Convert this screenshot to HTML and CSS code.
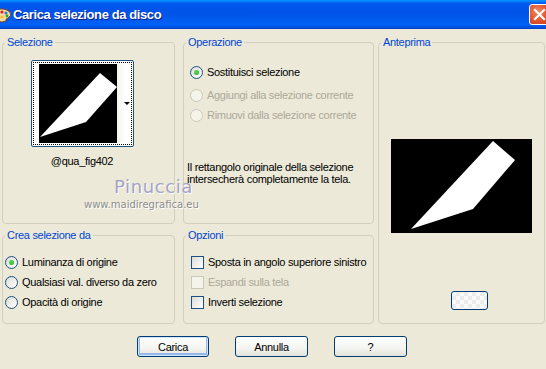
FILE: index.html
```html
<!DOCTYPE html>
<html lang="it">
<head>
  <meta charset="UTF-8" />
  <title>Carica selezione da disco</title>
  <link rel="stylesheet" href="styles.css">
</head>
<body>

<div class="window">
  <div class="titlebar">
    <svg class="app-icon" width="12" height="16" viewBox="0 0 12 16">
      <path d="M-4 3 Q4 0 10 5 Q12 9 8 11 Q5 12 6 14 Q3 16 -4 14 Z" fill="#f3d9a4" stroke="#7a4b1c" stroke-width="1"/>
      <circle cx="2" cy="5" r="1.6" fill="#e02020"/>
      <circle cx="6" cy="6" r="1.6" fill="#2a7de0"/>
      <circle cx="7" cy="9" r="1.4" fill="#28a828"/>
      <circle cx="2" cy="10" r="1.5" fill="#f0c020"/>
    </svg>
    <span class="title">Carica selezione da disco</span>
    <div class="close-btn">
      <svg width="13" height="13" viewBox="0 0 13 13"><path d="M2 2 L11 11 M11 2 L2 11" stroke="#fff" stroke-width="2.2" stroke-linecap="square"/></svg>
    </div>
  </div>

  <div class="panels">
    <fieldset class="group g-selezione">
      <legend>Selezione</legend>
      <div class="thumb">
        <div class="thumb-focus">
          <svg class="thumb-img" width="78" height="79" viewBox="0 0 78 79">
            <rect width="78" height="79" fill="#000"/>
            <polygon points="61,9 78,23 47,58 1,73" fill="#fff"/>
          </svg>
          <div class="thumb-strip"></div>
          <span class="thumb-arrow"></span>
        </div>
      </div>
      <div class="thumb-name">@qua_fig402</div>
    </fieldset>

    <fieldset class="group g-operazione">
      <legend>Operazione</legend>
      <div class="opt"><span class="radio checked"></span>Sostituisci selezione</div>
      <div class="opt disabled"><span class="radio"></span>Aggiungi alla selezione corrente</div>
      <div class="opt disabled"><span class="radio"></span>Rimuovi dalla selezione corrente</div>
      <p class="note">Il rettangolo originale della selezione intersecherà completamente la tela.</p>
    </fieldset>

    <fieldset class="group g-anteprima">
      <legend>Anteprima</legend>
      <svg class="preview" width="141" height="94" viewBox="0 0 141 94">
        <rect width="141" height="94" fill="#000"/>
        <polygon points="102,2 124,21 82,70 20,90" fill="#fff"/>
      </svg>
      <div class="swatch-btn"></div>
    </fieldset>

    <fieldset class="group g-crea">
      <legend>Crea selezione da</legend>
      <div class="opt"><span class="radio checked"></span>Luminanza di origine</div>
      <div class="opt"><span class="radio"></span>Qualsiasi val. diverso da zero</div>
      <div class="opt"><span class="radio"></span>Opacità di origine</div>
    </fieldset>

    <fieldset class="group g-opzioni">
      <legend>Opzioni</legend>
      <div class="opt"><span class="check"></span>Sposta in angolo superiore sinistro</div>
      <div class="opt disabled"><span class="check"></span>Espandi sulla tela</div>
      <div class="opt"><span class="check"></span>Inverti selezione</div>
    </fieldset>
  </div>

  <div class="buttons">
    <button class="btn default">Carica</button>
    <button class="btn">Annulla</button>
    <button class="btn">?</button>
  </div>

  <div class="watermark">
    <div class="wm-name">Pinuccia</div>
    <div class="wm-url">www.maidiregrafica.eu</div>
  </div>
</div>

</body>
</html>
```

FILE: styles.css
```css
body {
  margin: 0;
  background: #ece9d8;
  font-family: "Liberation Sans", Arial, sans-serif;
  font-size: 11px;
  letter-spacing: -0.3px;
  color: #000;
}

.window {
  position: relative;
  width: 546px;
  height: 369px;
  overflow: hidden;
  background: #ece9d8;
}

.titlebar {
  height: 29px;
  display: flex;
  align-items: center;
  background: linear-gradient(#0997ff 0, #0058ee 12%, #0053e6 45%, #0061f6 85%, #0052e0 94%, #003dc8 100%);
}

.app-icon {
  flex: none;
  margin-top: 1px;
}

.title {
  margin-left: 1px;
  color: #fff;
  font-weight: bold;
  font-size: 13px;
  letter-spacing: -0.4px;
  text-shadow: 1px 1px 0 #0a1e8a;
}

.close-btn {
  margin-left: auto;
  margin-right: -4px;
  width: 19px;
  height: 19px;
  border: 1px solid #fff;
  border-radius: 3px;
  background: radial-gradient(circle at 40% 35%, #f08a64 0, #e0542e 55%, #c03c1c 100%);
  display: flex;
  align-items: center;
  justify-content: center;
}

.panels {
  display: grid;
  grid-template-columns: 173px 8px 191px 4px 167px;
  grid-template-rows: 188px 95px;
  row-gap: 5px;
  padding: 7px 0 0 2px;
}

.g-selezione { grid-column: 1; grid-row: 1; }
.g-operazione { grid-column: 3; grid-row: 1; }
.g-anteprima { grid-column: 5; grid-row: 1 / 3; }
.g-crea { grid-column: 1; grid-row: 2; }
.g-opzioni { grid-column: 3; grid-row: 2; }

.group {
  margin: 0;
  padding: 0;
  min-width: 0;
  border: 1px solid #d0d0bf;
  border-radius: 4px;
}

.group legend {
  margin-left: 2px;
  padding: 0 2px;
  color: #0046d5;
  line-height: 13px;
}

/* Selezione */
.thumb {
  margin: 11px 0 0 28px;
  width: 99px;
  height: 83px;
  border: 1px solid #1c5180;
  border-radius: 2px;
  background: #fff;
  padding: 1px;
}

.thumb-focus {
  position: relative;
  height: 83px;
  border: 1px dotted #000;
  display: flex;
  align-items: flex-start;
  padding: 1px 0 0 5px;
  box-sizing: border-box;
}

.thumb-img {
  display: block;
}

.thumb-strip {
  width: 9px;
  height: 79px;
  background: linear-gradient(to right, #f4f4f0, #fff);
}

.thumb-arrow {
  position: absolute;
  right: 1px;
  top: 39px;
  border-left: 3px solid transparent;
  border-right: 3px solid transparent;
  border-top: 3px solid #000;
}

.thumb-name {
  margin: 8px 0 0 18px;
  width: 122px;
  text-align: center;
}

/* options */
.opt {
  display: flex;
  align-items: center;
  height: 20px;
  white-space: nowrap;
}

.opt.disabled {
  color: #aca899;
}

.g-operazione .opt { margin-left: 6px; }
.g-operazione .opt:first-of-type { margin-top: 13px; margin-bottom: 3px; }
.g-crea .opt { margin-left: 2px; }
.g-crea .opt:first-of-type,
.g-opzioni .opt:first-of-type { margin-top: 10px; }
.g-opzioni .opt { margin-left: 7px; }

.radio {
  flex: none;
  box-sizing: border-box;
  width: 13px;
  height: 13px;
  margin-right: 4px;
  border: 1px solid #1c5180;
  border-radius: 50%;
  background: linear-gradient(135deg, #dcdcd5, #fff);
  position: relative;
}

.radio.checked::after {
  content: "";
  position: absolute;
  left: 3px;
  top: 3px;
  width: 5px;
  height: 5px;
  border-radius: 50%;
  background: radial-gradient(circle at 40% 40%, #5ee05e, #21a121);
}

.disabled .radio {
  border-color: #cac8bb;
  background: #f5f4ea;
}

.check {
  flex: none;
  box-sizing: border-box;
  width: 13px;
  height: 13px;
  margin-right: 4px;
  border: 1px solid #1c5180;
  background: linear-gradient(135deg, #dcdcd7, #fff);
}

.disabled .check {
  border-color: #cac8bb;
  background: #f5f4ea;
}

.note {
  margin: 36px 0 0 3px;
  line-height: 12px;
  width: 180px;
}

/* Anteprima */
.preview {
  display: block;
  margin: 90px 0 0 12px;
}

.swatch-btn {
  margin: 58px 0 0 72px;
  width: 35px;
  height: 17px;
  border: 1px solid #003c74;
  border-radius: 3px;
  background:
    linear-gradient(45deg, #ececec 25%, transparent 25%, transparent 75%, #ececec 75%) 0 0 / 8px 8px,
    linear-gradient(45deg, #ececec 25%, #fafafa 25%, #fafafa 75%, #ececec 75%) 4px 4px / 8px 8px;
}

/* buttons */
.buttons {
  display: flex;
  gap: 26px;
  margin-top: 12px;
  padding-left: 137px;
}

.btn {
  width: 73px;
  height: 21px;
  padding: 0;
  font-family: inherit;
  font-size: 11px;
  letter-spacing: -0.3px;
  color: #000;
  border: 1px solid #003c74;
  border-radius: 3px;
  background: linear-gradient(#fff, #f4f4f0 60%, #e3e2da);
}

.btn.default {
  width: 72px;
  box-shadow: inset 0 0 0 1px #cee7ff, inset 0 -1px 0 2px #98b8ea;
}

/* watermark */
.watermark {
  position: absolute;
  left: 84px;
  top: 175px;
  letter-spacing: 0;
}

.wm-name {
  margin-left: 30px;
  font-family: "DejaVu Sans", sans-serif;
  font-size: 18px;
  letter-spacing: 0.6px;
  color: #a3a4c6;
  text-shadow: 1px 1px 0 #ffffff;
  line-height: 24px;
}

.wm-url {
  font-family: "DejaVu Sans", sans-serif;
  font-size: 10px;
  color: #8c8c8c;
  text-shadow: 1px 1px 0 #fff;
  line-height: 12px;
}
```
